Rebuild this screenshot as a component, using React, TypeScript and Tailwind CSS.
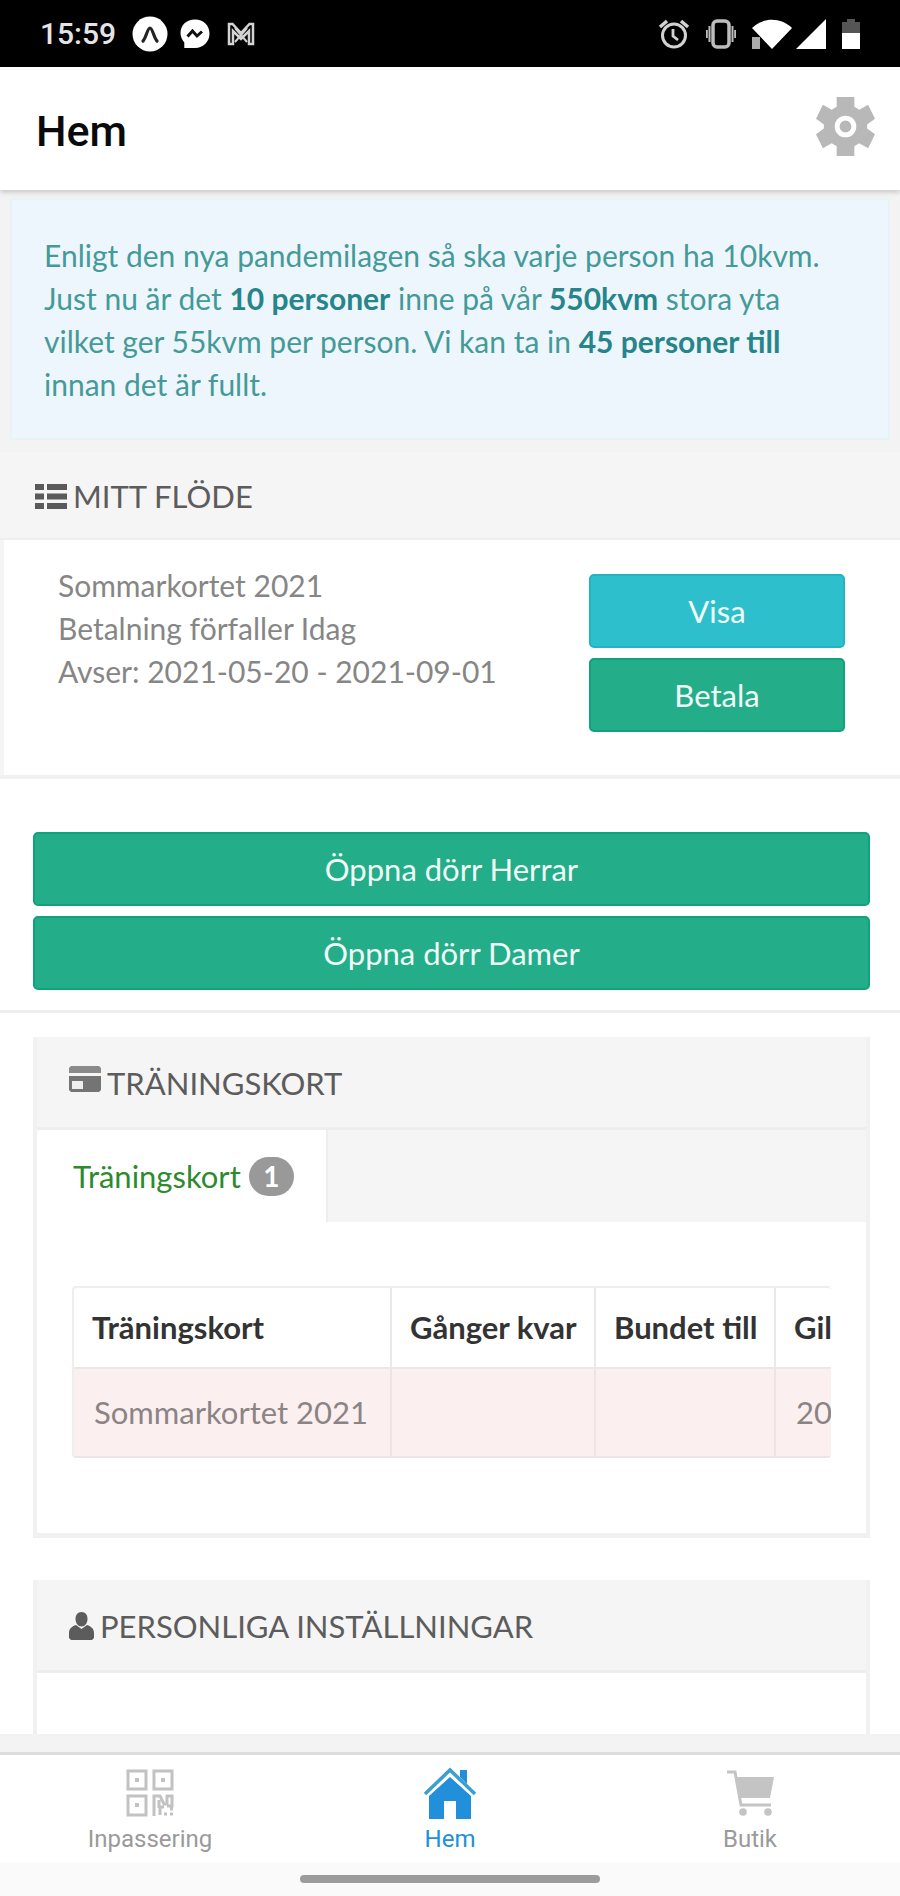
import type { ReactNode } from "react";

const lato = "font-['Lato','Liberation_Sans',sans-serif]";
const roboto = "font-['Roboto','Liberation_Sans',sans-serif]";

function StatusBar() {
  return (
    <div className="flex h-[67px] shrink-0 items-center justify-between bg-black pl-10 pr-10 text-white">
      <div className="flex items-center">
        <span className="text-[30px] leading-8 font-medium text-[#e4e4e4] font-['Roboto','Liberation_Sans',sans-serif]">15:59</span>
        <svg className="ml-4 size-9" viewBox="0 0 36 36" aria-hidden="true">
          <circle cx="18" cy="18" r="17.500" fill="#fff" />
          <path d="M11 25c3-3 4.500-13 7-13s4 10 7 13" fill="none" stroke="#222" strokeWidth="3.200" strokeLinecap="round" />
        </svg>
        <svg className="ml-3 size-[30px]" viewBox="0 0 30 30" aria-hidden="true">
          <path d="M15 .5C6.500.5.5 6.300.5 14c0 4 1.700 7 3.800 9.500V29H15c8.500 0 14.500-6.500 14.500-14.500S23.500.5 15 .5z" fill="#fff" />
          <path d="m7.500 17.500 5-5.500 4.500 5 5-4.500" fill="none" stroke="#111" strokeWidth="3" />
        </svg>
        <svg className="ml-4 h-6 w-[30px]" viewBox="0 0 30 24" fill="none" stroke="#d4d4d4" aria-hidden="true">
          <path d="M3 22V2h3.500l8.500 9 8.500-9H27v20h-4V9l-8 8-8-8v13z" strokeWidth="2.500" />
          <path d="m9 20 12-14M21 20 9 6" strokeWidth="2" />
        </svg>
      </div>
      <div className="flex items-center">
        <svg className="size-8" viewBox="0 0 32 32" fill="none" stroke="#d2d2d2" aria-hidden="true">
          <circle cx="16" cy="17.500" r="11.500" strokeWidth="3" />
          <path d="m2 9 7-6M30 9l-7-6" strokeWidth="3.500" />
          <path d="M15 11v7l5 4" strokeWidth="2.800" />
        </svg>
        <svg className="ml-4 h-8 w-[30px]" viewBox="0 0 30 32" fill="none" stroke="#bdbdbd" aria-hidden="true">
          <rect x="7" y="3" width="16" height="26" rx="4" strokeWidth="3.500" />
          <path d="M3.500 8v16M26.500 8v16M.8 12v8M29.200 12v8" strokeWidth="2" />
        </svg>
        <svg className="ml-4 h-[30px] w-10" viewBox="0 0 40 30" aria-hidden="true">
          <path d="M0 9C11-2 29-2 40 9L20 30z" fill="#fff" />
          <path d="M0 18h8v12H0z" fill="#aaa" />
        </svg>
        <svg className="ml-1 size-[30px]" viewBox="0 0 30 30" fill="#fff" aria-hidden="true">
          <path d="M30 0v30H0z" />
        </svg>
        <svg className="ml-4 h-[30px] w-[18px]" viewBox="0 0 18 30" aria-hidden="true">
          <path d="M0 3h5V0h8v3h5v12H0z" fill="#555" />
          <path d="M0 14h18v16H0z" fill="#fff" />
        </svg>
      </div>
    </div>
  );
}

function ListIcon() {
  return (
    <svg className="h-[25px] w-8" viewBox="0 0 32 25" fill="#5a5a5a" aria-hidden="true">
      <path d="M0 0h9v6H0zM12 0h20v6H12zM0 9.500h9v6H0zM12 9.500h20v6H12zM0 19h9v6H0zM12 19h20v6H12z" />
    </svg>
  );
}

function CardIcon() {
  return (
    <svg className="-mt-2 h-[26px] w-8" viewBox="0 0 32 26" aria-hidden="true">
      <path d="M2 0h28l2 2v5H0V2z" fill="#8a8a8a" />
      <path d="M0 10h32v14l-2 2H2l-2-2z" fill="#747474" />
      <path d="M3 15h11v8H3z" fill="#eee" />
    </svg>
  );
}

function UserIcon() {
  return (
    <svg className="h-7 w-[25px]" viewBox="0 0 25 28" fill="#5c5c5c" aria-hidden="true">
      <path d="M12.500 0C8.500 0 6.500 3 6.500 7c0 4 2.500 7.500 6 7.500s6-3.500 6-7.500c0-4-2-7-6-7z" />
      <path d="M7 13c-4.500 1.500-7 4-7 8v5l2 2h21l2-2v-5c0-4-2.500-6.500-7-8l-5.500 4z" />
    </svg>
  );
}

function Heading({ icon, children }: { icon: ReactNode; children: ReactNode }) {
  return (
    <h2 className="flex items-center gap-[6px] text-[31px] leading-10 text-[#5c5c5c]">
      {icon}
      {children}
    </h2>
  );
}

function Action({ children, tone = "green" }: { children: ReactNode; tone?: "green" | "cyan" }) {
  const colors =
    tone === "green" ? "bg-[#23ad88] border-[#10a279]" : "bg-[#2dc0cc] border-[#1fb5c1]";
  return (
    <button type="button" className={`h-[74px] w-full rounded-[5px] border-2 text-[31px] leading-10 text-[#f0fbf8] ${colors}`}>
      {children}
    </button>
  );
}

function Panel({ icon, title, children, className = "" }: { icon: ReactNode; title: string; children?: ReactNode; className?: string }) {
  return (
    <section className={`mr-[30px] ml-[33px] border-x-4 border-[#f1f1f1] bg-white ${className}`}>
      <div className="h-[93px] border-b-3 border-[#eeeeee] bg-[#f5f5f5] px-8 pt-[26px]">
        <Heading icon={icon}>{title}</Heading>
      </div>
      {children}
    </section>
  );
}

function QrIcon() {
  return (
    <svg className="size-12" viewBox="0 0 48 48" fill="none" stroke="#c2c2c2" strokeWidth="3" aria-hidden="true">
      <path d="M2 2h18v18H2zM28 2h18v18H28zM2 27h18v19H2z" />
      <path d="M9 11h4M35 11h4M9 36h4" strokeWidth="4" />
      <path d="M28 47V27h6l4 8h3v-8h5v10h-5M33 31v8M38 38h-4v8M38 45h3M44 45h3M44 40h3" />
    </svg>
  );
}

function HomeIcon() {
  return (
    <svg className="h-[52px] w-[54px]" viewBox="0 0 54 52" aria-hidden="true">
      <path d="M37 3h7v14l-7-7z" fill="#218fd9" />
      <path d="M27 10 48 29v23H33V34H21v18H6V29z" fill="#218fd9" />
      <path d="M2 27 27 3l25 24" fill="none" stroke="#3b9fd2" strokeWidth="3.500" />
    </svg>
  );
}

function CartIcon() {
  return (
    <svg className="h-[46px] w-12" viewBox="0 0 48 46" fill="#c4c4c4" aria-hidden="true">
      <path d="M10 7h38l-4 21H14z" />
      <path d="M1 2h8l6 33h30" fill="none" stroke="#c4c4c4" strokeWidth="3" />
      <circle cx="17" cy="42" r="3.800" />
      <circle cx="42" cy="42" r="3.800" />
    </svg>
  );
}

function NavItem({ icon, label, active = false }: { icon: ReactNode; label: string; active?: boolean }) {
  return (
    <a href="#" className={`flex flex-col items-center gap-1 text-2xl leading-8 ${active ? "text-[#218fd9]" : "text-[#9a9a9a]"} ${roboto}`}>
      <span className="flex h-[52px] items-center">{icon}</span>
      {label}
    </a>
  );
}

const th = "border-r-2 border-b-2 border-[#e9e9e9] px-[18px] py-[18px] text-left font-bold whitespace-nowrap";
const td = "h-[89px] border-r-2 border-b-2 border-[#efe4e4] px-5 whitespace-nowrap";

export default function App() {
  return (
    <div className={`flex min-h-screen flex-col bg-[#f3f3f3] ${lato}`}>
      <StatusBar />
      <header className="relative flex h-[123px] shrink-0 items-center justify-between bg-white pr-[25px] pl-9 shadow-[0_2px_5px_rgba(0,0,0,0.2)]">
        <h1 className="pt-1 text-[43px] leading-[48px] font-medium text-[#0a0a0a] font-['Roboto','Liberation_Sans',sans-serif]">Hem</h1>
        <button type="button" aria-label="Inställningar" className="pb-1">
          <svg className="size-[59px]" viewBox="0 0 60 60" aria-hidden="true">
            <path d="M21 0h18v10l5 3 9-5 7 14-8 6v4l8 6-7 14-9-5-5 3v10H21V50l-5-3-9 5-7-14 8-6v-4l-8-6L7 8l9 5 5-3z" fill="#b8b8b8" />
            <circle cx="30" cy="30" r="8.500" fill="none" stroke="#fff" strokeWidth="5" />
          </svg>
        </button>
      </header>

      <main className="flex flex-1 flex-col">
        <p className="mx-[10px] mt-2 mb-3 border-2 border-[#e6f4f6] bg-[#eef6fd] px-8 pt-[34px] pb-8 text-[30px] leading-[43px] text-[#449a98]">
          Enligt den nya pandemilagen så ska varje person ha 10kvm. Just nu är det{" "}
          <b className="text-[#26858a]">10 personer</b> inne på vår <b className="text-[#26858a]">550kvm</b> stora yta vilket ger
          55kvm per person. Vi kan ta in <b className="text-[#26858a]">45 personer till</b> innan det är fullt.
        </p>

        <div className="flex flex-1 flex-col bg-white">
          <section className="border-b-4 border-[#f1f1f1]">
            <div className="h-[88px] border-b-2 border-[#eeeeee] bg-[#f5f5f5] px-[35px] pt-6">
              <Heading icon={<ListIcon />}>MITT FLÖDE</Heading>
            </div>
            <div className="flex justify-between border-l-4 border-[#f5f5f5] pt-[34px] pr-[55px] pb-[43px] pl-[54px]">
              <p className="-mt-[10px] text-[30px] leading-[43px] text-[#868686]">
                Sommarkortet 2021
                <br />
                Betalning förfaller Idag
                <br />
                Avser: 2021-05-20 - 2021-09-01
              </p>
              <div className="flex w-64 flex-col gap-[10px]">
                <Action tone="cyan">Visa</Action>
                <Action>Betala</Action>
              </div>
            </div>
          </section>

          <div className="flex flex-col gap-[10px] border-b-3 border-[#eeeeee] pt-[53px] pr-[30px] pb-5 pl-[33px]">
            <Action>Öppna dörr Herrar</Action>
            <Action>Öppna dörr Damer</Action>
          </div>

          <Panel icon={<CardIcon />} title="TRÄNINGSKORT" className="mt-6 border-b-[5px]">
            <div className="flex h-[92px] bg-[#f5f5f5]">
              <button type="button" className="flex items-center gap-2 border-r-2 border-[#eeeeee] bg-white pr-8 pl-9 text-[31px] leading-10 text-[#2d8a2d]">
                Träningskort
                <span className="flex h-[39px] w-[45px] items-center justify-center rounded-full bg-[#999999] text-[28px] font-bold text-white">1</span>
              </button>
            </div>
            <div className="px-[35px] pt-16 pb-[75px]">
              <div className="overflow-x-auto rounded-sm border-t-2 border-l-2 border-[#eeeeee] [scrollbar-width:none]">
                <table className="w-[960px] table-fixed border-separate border-spacing-0 text-[31px] leading-[43px]">
                  <colgroup>
                    <col className="w-[318px]" />
                    <col className="w-[204px]" />
                    <col className="w-[180px]" />
                    <col />
                  </colgroup>
                  <thead className="text-[#333333]">
                    <tr>
                      <th className={th}>Träningskort</th>
                      <th className={th}>Gånger kvar</th>
                      <th className={th}>Bundet till</th>
                      <th className={th}>Giltig till</th>
                    </tr>
                  </thead>
                  <tbody className="bg-[#fbf0ef] text-[#8b8484]">
                    <tr>
                      <td className={td}>Sommarkortet 2021</td>
                      <td className={td} />
                      <td className={td} />
                      <td className={td}>2021-09-01</td>
                    </tr>
                  </tbody>
                </table>
              </div>
            </div>
          </Panel>

          <Panel icon={<UserIcon />} title="PERSONLIGA INSTÄLLNINGAR" className="mt-[42px] min-h-[150px] flex-1" />
        </div>
      </main>

      <footer className="mt-[18px] shrink-0 border-t-3 border-[#dddddd] bg-[#fafafa]">
        <nav className="grid h-[108px] grid-cols-3 bg-white pt-3">
          <NavItem icon={<QrIcon />} label="Inpassering" />
          <NavItem icon={<HomeIcon />} label="Hem" active />
          <NavItem icon={<CartIcon />} label="Butik" />
        </nav>
        <div className="flex justify-center pt-3 pb-[13px]">
          <div className="h-2 w-1/3 rounded-full bg-[#9c9c9c]" />
        </div>
      </footer>
    </div>
  );
}
